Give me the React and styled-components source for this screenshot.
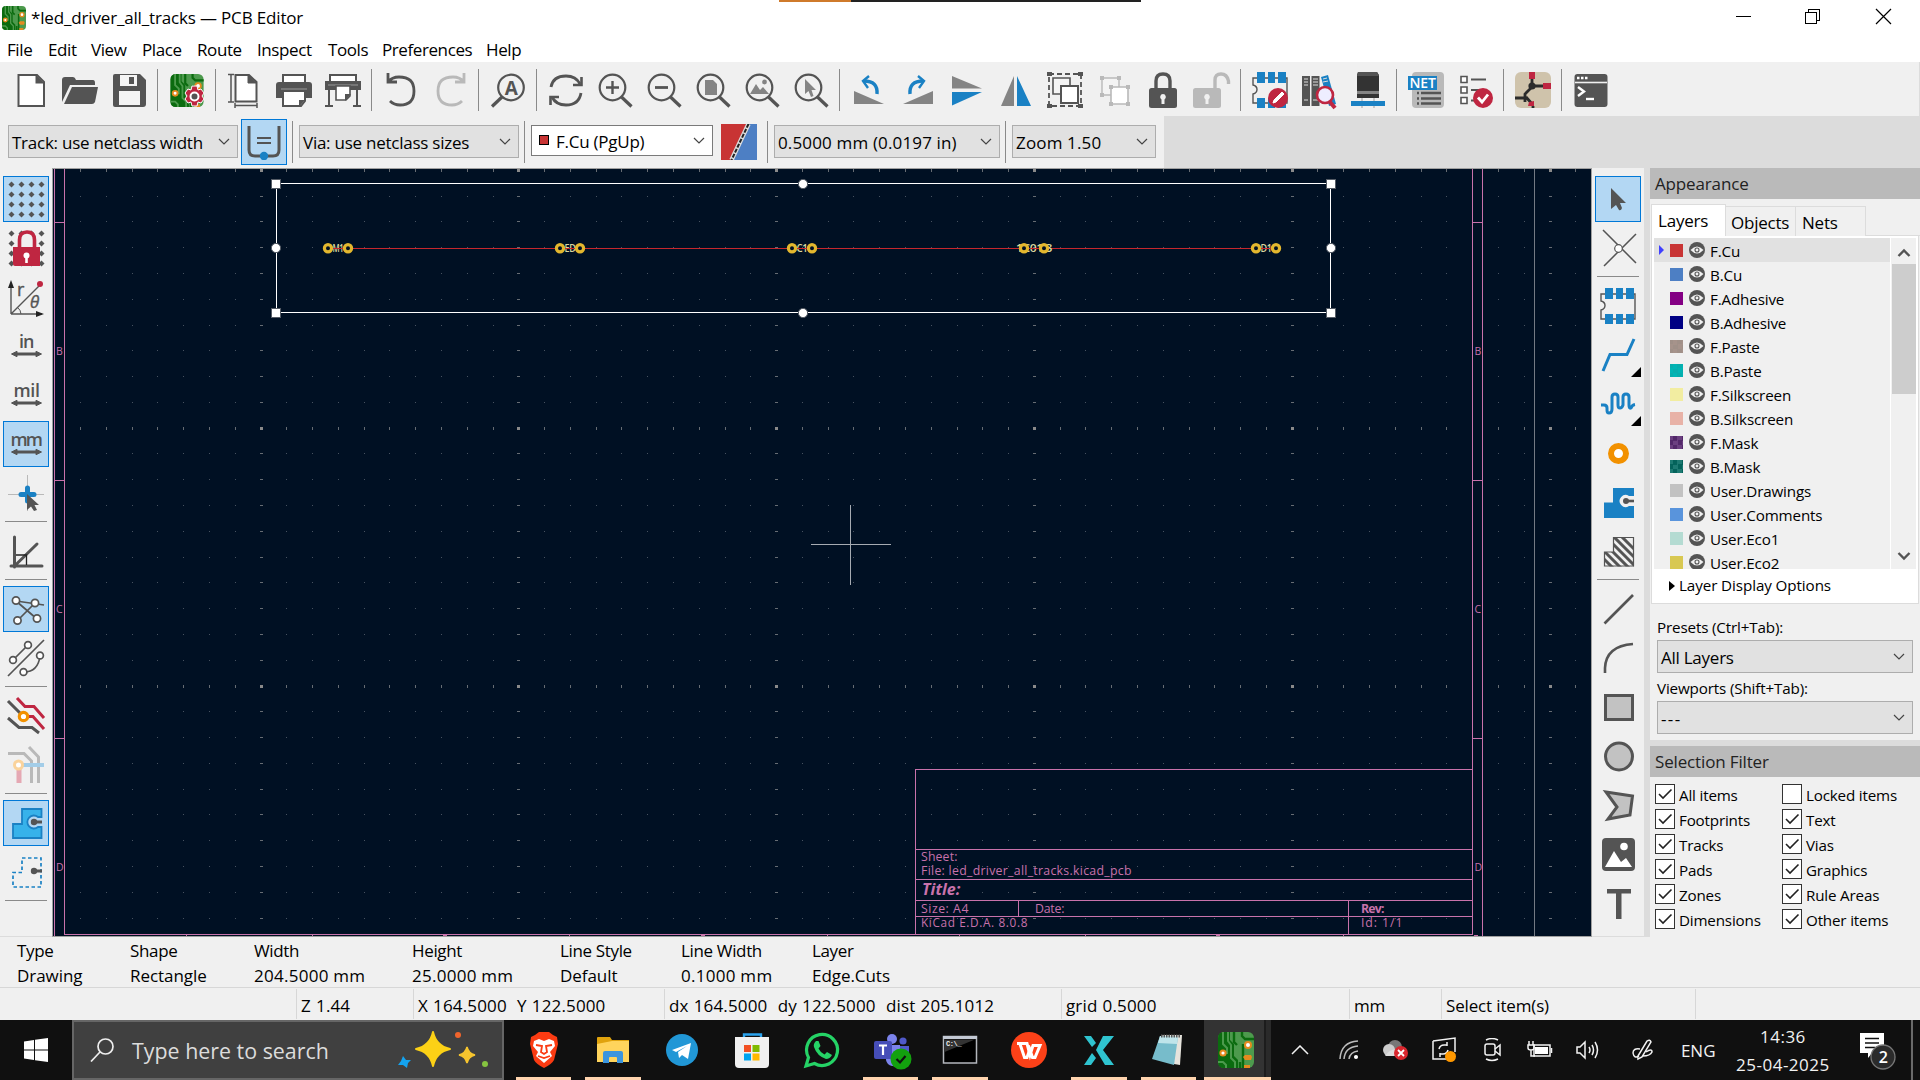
import React from "react";
import styled, { createGlobalStyle, css } from "styled-components";

const Global = createGlobalStyle`
  * { box-sizing: border-box; }
  body { margin: 0; overflow: hidden; background: #f0f0f0; }
  svg { display: block; flex: none; }
`;

const K = "#545454";
const B = "#1a81c4";
const R = "#bf2641";
const G = "#848484";
const L = "#b9b9b9";
const O = "#f29100";
const P = "#c872ab";

/* ---------- shell ---------- */
const Window = styled.div`
  width: 1920px;
  height: 1080px;
  display: flex;
  flex-direction: column;
  background: #f0f0f0;
  color: #000;
  font-family: "Open Sans", "Noto Sans", sans-serif;
  font-size: 17px;
  letter-spacing: -0.024em;
  white-space: pre;
  overflow: hidden;
`;
const TopStrip = styled.div`
  position: absolute;
  top: 0;
  left: 779px;
  width: 362px;
  height: 2px;
  background: linear-gradient(to right, #cf7a2b 72px, #222 72px);
`;
const TitleBar = styled.header`
  height: 35px;
  flex: none;
  background: #fff;
  display: flex;
  align-items: center;
  padding-left: 2px;
`;
const TitleText = styled.span`
  margin-left: 5px;
  flex: 1;
  line-height: 35px;
  letter-spacing: -0.16px;
`;
const WinControls = styled.div`
  display: flex;
  width: 212px;
  height: 35px;
`;
const MenuBar = styled.nav`
  height: 27px;
  flex: none;
  background: #fff;
  display: flex;
  padding-left: 7px;
`;
const MenuItem = styled.span`
  width: ${(p) => p.$w}px;
  line-height: 29px;
  flex: none;
`;
const Toolbar = styled.div`
  height: 54px;
  flex: none;
  display: flex;
  align-items: flex-start;
  padding: 10px 0 0 6px;
  border-right: 1px solid #dcdcdc;
`;
const Tool = styled.span`
  width: 49px;
  height: 36px;
  flex: none;
  padding-left: 7px;
`;
const Sep = styled.span`
  width: 1px;
  height: 42px;
  flex: none;
  background: #8a8a8a;
  margin: ${(p) => p.$m || "-3px 4px 0 4px"};
`;
const OptionsRow = styled.div`
  height: 52px;
  flex: none;
  background: #dcdcdc;
`;
const Options = styled.div`
  width: 1164px;
  height: 52px;
  background: #f0f0f0;
  display: flex;
  align-items: flex-start;
  padding: 3px 0 0 8px;
`;
const Combo = styled.div`
  width: ${(p) => p.$w}px;
  height: ${(p) => p.$h || 33}px;
  margin: ${(p) => p.$m || "6px 0 0 0"};
  flex: none;
  display: flex;
  align-items: center;
  justify-content: space-between;
  padding: 0 7px 0 ${(p) => (p.$white ? 7 : 3)}px;
  background: ${(p) => (p.$white ? "#fff" : "#e1e1e1")};
  border: 1px solid ${(p) => (p.$white ? "#7a7a7a" : "#adadad")};
  line-height: 30px;
  letter-spacing: ${(p) => p.$ls || "-0.25px"};
`;
const ComboLabel = styled.span`
  display: flex;
  align-items: center;
  padding-top: 2px;
`;
const CuSwatch = styled.i`
  width: 10px;
  height: 10px;
  background: #c83434;
  border: 1px solid #000;
  margin-right: 7px;
  margin-top: -4px;
`;
const Toggle = styled.span`
  width: 46px;
  height: 46px;
  flex: none;
  margin: ${(p) => p.$m || "0"};
  padding: 4px;
  border: 1px solid ${(p) => (p.$on ? "#0078d7" : "transparent")};
  background: ${(p) => (p.$on ? "#b3d7f3" : "transparent")};
  position: relative;
`;
const Flyout = styled.i`
  position: absolute;
  right: -1px;
  bottom: 0;
  border-left: 10px solid transparent;
  border-bottom: 10px solid #000;
`;

/* ---------- middle ---------- */
const Middle = styled.main`
  height: 769px;
  flex: none;
  display: flex;
`;
const SideBar = styled.aside`
  width: 52px;
  height: 769px;
  flex: none;
  display: flex;
  flex-direction: column;
  align-items: center;
  padding-top: 8px;
  gap: 3px;
  border-bottom: 1px solid #dcdcdc;
`;
const HSep = styled.span`
  width: 42px;
  height: 1px;
  flex: none;
  background: #8a8a8a;
  margin: 2px 0 3px;
`;
const CanvasFrame = styled.div`
  width: 1540px;
  height: 769px;
  flex: none;
  border: 1px solid #a0a0a0;
  background: #001023;
`;
const Dock = styled.section`
  width: 276px;
  background: #dcdcdc;
  padding-left: 6px;
`;
const Caption = styled.div`
  height: 31px;
  background: #bababa;
  color: #222;
  padding-left: 5px;
  line-height: 31px;
  letter-spacing: -0.15px;
`;
const Panel = styled.div`
  height: ${(p) => p.$h}px;
  background: #f0f0f0;
  padding: ${(p) => p.$p || "0"};
  margin-bottom: ${(p) => p.$mb || 0}px;
`;
const Tabs = styled.div`
  display: flex;
  height: 32px;
  align-items: flex-end;
  border-bottom: 1px solid #dcdcdc;
`;
const Tab = styled.span`
  width: ${(p) => p.$w}px;
  height: ${(p) => (p.$on ? 32 : 30)}px;
  background: ${(p) => (p.$on ? "#fff" : "#f0f0f0")};
  border: 1px solid #dcdcdc;
  border-left-width: ${(p) => (p.$on ? 1 : 0)}px;
  border-bottom: 0;
  margin-bottom: -1px;
  line-height: 31px;
  padding-left: ${(p) => p.$pl}px;
  letter-spacing: -0.22px;
`;
const Page = styled.div`
  width: 268px;
  height: 368px;
  background: #fff;
  border: 1px solid #dcdcdc;
  border-top: 0;
  padding: 2px 1px 0 2px;
`;
const ListWrap = styled.div`
  display: flex;
  height: 331px;
`;
const List = styled.div`
  width: 236px;
  height: 331px;
  overflow: hidden;
  background: #f0f0f0;
`;
const Row = styled.div`
  height: 24px;
  display: flex;
  align-items: center;
  background: ${(p) => (p.$on ? "#e1e1e1" : "transparent")};
  font-size: 15.2px;
  letter-spacing: -0.15px;
`;
const Mark = styled.i`
  width: 5px;
  height: 10px;
  margin: 0 6px 0 5px;
  border: 5px solid transparent;
  border-right: 0;
  border-left-color: ${(p) => (p.$on ? "#4040ff" : "transparent")};
`;
const Swatch = styled.i`
  width: 13px;
  height: 13px;
  margin-right: 6px;
  background: ${(p) => p.$c};
  ${(p) =>
    p.$c2 &&
    css`
      background: conic-gradient(${p.$c2} 25%, ${p.$c} 0 50%, ${p.$c2} 0 75%, ${p.$c} 0) 3px 0 / 9px 9px;
    `}
`;
const RowName = styled.span`
  margin-left: 5px;
  line-height: 22px;
  padding-top: 2px;
`;
const Scroll = styled.div`
  width: 25px;
  height: 331px;
  margin-left: 1px;
  display: flex;
  flex-direction: column;
  align-items: center;
  justify-content: space-between;
  background: #f0f0f0;
`;
const Thumb = styled.i`
  width: 24px;
  height: 130px;
  background: #cdcdcd;
  margin-bottom: 149px;
`;
const DisplayOptions = styled.div`
  display: flex;
  align-items: center;
  font-size: 15.2px;
  line-height: 33px;
  padding-left: 15px;
  letter-spacing: -0.09px;
  i {
    border: 5px solid transparent;
    border-left: 6px solid #000;
    border-right: 0;
    margin-right: 4px;
  }
`;
const Field = styled.div`
  font-size: 15.2px;
  line-height: 24px;
  letter-spacing: -0.15px;
  margin: ${(p) => p.$m};
`;
const Checks = styled.div`
  display: grid;
  grid-template-columns: 127px 130px;
  grid-auto-rows: 25px;
  padding: 7px 0 0 5px;
  font-size: 15.2px;
  letter-spacing: -0.18px;
`;
const Check = styled.label`
  display: flex;
  line-height: 23px;
  gap: 4px;
`;
const Box = styled.i`
  width: 20px;
  height: 20px;
  border: 1px solid #333;
  background: #fff;
`;

/* ---------- bottom ---------- */
const Message = styled.div`
  height: 51px;
  flex: none;
  display: flex;
  padding: 1px 0 0 17px;
  border-bottom: 1px solid #d7d7d7;
`;
const MsgItem = styled.div`
  width: ${(p) => p.$w}px;
  line-height: 25px;
`;
const MsgLabel = styled.div`
  letter-spacing: -0.35px;
`;
const MsgValue = styled.div`
  letter-spacing: ${(p) => (p.$num ? "0.27px" : "-0.05px")};
`;
const Status = styled.div`
  height: 32px;
  flex: none;
  display: flex;
  padding-top: 1px;
`;
const Cell = styled.div`
  width: ${(p) => p.$w}px;
  height: 30px;
  flex: none;
  border-right: 1px solid #d7d7d7;
  padding-left: 4px;
  line-height: 33px;
  letter-spacing: ${(p) => (p.$num ? "0.14px" : "-0.15px")};
  word-spacing: ${(p) => (p.$num ? "0.6px" : "0")};
`;
const TaskBar = styled.footer`
  height: 60px;
  flex: none;
  background: #101010;
  color: #f2f2f2;
  display: flex;
`;
const Start = styled.div`
  width: 72px;
  padding: 18px 0 0 24px;
`;
const Search = styled.div`
  width: 432px;
  height: 60px;
  background: #404040;
  border: 2px solid #666;
  display: flex;
  align-items: center;
  padding-left: 16px;
  margin-right: 5px;
  font-size: 21.4px;
  letter-spacing: 0;
  color: #dcdcdc;
`;
const SearchText = styled.span`
  margin-left: 18px;
  width: 263px;
  line-height: 60px;
  padding-top: 2px;
`;
const TaskButton = styled.div`
  width: ${(p) => p.$w || 69.4}px;
  height: 60px;
  flex: none;
  display: flex;
  justify-content: center;
  padding-top: 12px;
  margin-left: ${(p) => p.$ml || 0}px;
  background: ${(p) => (p.$active ? "linear-gradient(to right, #333 60px, #1c1c1c 60px 62px, #2a2a2a 62px)" : "transparent")};
  padding-right: ${(p) => (p.$active ? 3 : 0)}px;
  position: relative;
`;
const Running = styled.i`
  position: absolute;
  bottom: 0;
  left: ${(p) => (p.$full ? 0 : 7)}px;
  right: ${(p) => (p.$full ? 0 : 7)}px;
  height: 3px;
  background: #ffd4ae;
`;
const Tray = styled.div`
  flex: 1;
  display: flex;
  align-items: center;
`;
const TrayIcon = styled.span`
  width: ${(p) => p.$w}px;
  flex: none;
  display: flex;
  justify-content: center;
`;
const Lang = styled.span`
  width: 50px;
  margin-left: 10px;
  padding-top: 1px;
  letter-spacing: 0;
`;
const Clock = styled.div`
  width: 104px;
  text-align: center;
  line-height: 28px;
  padding-top: 1px;
  letter-spacing: 0.5px;
`;
const Notice = styled.span`
  margin-left: 25px;
`;
const ShowDesktop = styled.i`
  width: 2px;
  height: 60px;
  background: #6a6a6a;
  margin-left: auto;
  margin-right: 7px;
`;

/* ---------- icons, 36 x 36 ---------- */
const I = ({ children, s = 36, ...r }) => (
  <svg width={s} height={s} viewBox="0 0 36 36" fill="none" {...r}>
    {children}
  </svg>
);
const Board = () => (
  <g>
    <rect x="0" y="0" width="36" height="36" rx="6" fill="#4d9a4d" />
    <path d="M0 6Q0 0 6 0H12V8L16 12V24L20 28V36H6Q0 36 0 30Z" fill="#0b6b0f" />
    <path d="M5 0V12L9 16V22M10 0V9L13 13V26L17 30V36M0 30H5L8 33V36M19 0V11L22 14V24" stroke="#4d9a4d" strokeWidth="2" />
    <path d="M24 0V4L27 7H36M16 0V10L19 13M22 30V36M25 12V36" stroke="#0b6b0f" strokeWidth="2.4" />
    <circle cx="30" cy="13" r="3" fill="#fff" stroke="#e58a1f" strokeWidth="2" />
    <circle cx="5" cy="21" r="2.6" fill="#fff" stroke="#e58a1f" strokeWidth="2" />
    <path d="M27 23H33L34 25L33 28H27L25 25ZM26 33H32V36H26Z" fill="#e58a1f" />
  </g>
);
const Lens = ({ children }) => (
  <g>
    <circle cx="15.5" cy="15.5" r="12.8" fill="#f0f0f0" stroke={K} strokeWidth="2.2" />
    <path d="M24.500 25L34.500 34.500" stroke={K} strokeWidth="3.2" />
    {children}
  </g>
);
const Arrow = () => <path d="M3.500 26L9 23.300V25H28V23.300L33.500 26L28 28.700V27H9V28.700Z" fill={K} stroke={K} />;
const Unit = ({ children, w }) => (
  <text x="18.500" y="19.800" textAnchor="middle" textLength={w} fontFamily="Open Sans" fontWeight="600" fontSize="18" fill={K}>
    {children}
  </text>
);
const dots = (c) =>
  [3.5, 13.5, 23.5, 33.5].flatMap((y) => [3.5, 13.5, 23.5, 33.5].map((x) => <path key={x + "," + y} d={`M${x - 3} ${y}L${x} ${y - 3}L${x + 3} ${y}L${x} ${y + 3}Z`} fill={c} />));
const Chip = () => (
  <g>
    <path d="M5 6H1V13Q5 14 5 17.500Q5 21 1 22V31H35V6Z" stroke={K} strokeWidth="1.4" />
    <path d="M5 0H13V11H5ZM16 0H23V11H16ZM26 0H34V11H26ZM5 26H13V36H5ZM16 26H23V36H16ZM26 26H34V36H26Z" fill={B} />
  </g>
);
const Lock = ({ c, open }) => (
  <g>
    <path d={open ? "M21 17V8Q21 2 27 2Q33 2 34.500 9V12" : "M11 17V9Q11 2 18 2Q25 2 25 9V17"} stroke={c} strokeWidth="3.4" />
    <rect x={open ? -1 : 4} y="16" width="28" height="20" rx="2.500" fill={c} />
    <path d={open ? "M13 22a3 3 0 0 1 1.500 5.500V32H11.500V27.500A3 3 0 0 1 13 22" : "M18 22a3 3 0 0 1 1.500 5.500V32H16.500V27.500A3 3 0 0 1 18 22"} fill="#f0f0f0" />
  </g>
);

const icons = {
  new: (
    <g>
      <path d="M5.500 3H24L31 10V34H5.500Z" fill="#fff" stroke={K} strokeWidth="2" />
      <path d="M22.500 2.500V11.500H31.500Z" fill={K} />
    </g>
  ),
  open: (
    <g fill={K}>
      <path d="M0 8Q0 5 3 5H11Q13 5 14 8H31Q33 8 33 11V13H8L0 30Z" />
      <path d="M10 15H36L33 30Q32 32 30 32H2Z" />
    </g>
  ),
  save: (
    <g>
      <path d="M4 2H29L35 8V32Q35 35 32 35H4Q2 35 2 33V4Q2 2 4 2Z" fill={K} />
      <path d="M9 3H26V14H9ZM8 19H29V33H8Z" fill="#f4f4f4" />
      <path d="M18 5H23V12H18Z" fill={K} />
    </g>
  ),
  setup: (
    <g>
      <g transform="translate(1.500 2) scale(.92)"><Board /></g>
      <g stroke="#fff" strokeWidth="1"><path d="M23 14h5l1 4 3-1 3 4-2 3 2 3-3 4-3-1-1 4h-5l-1-4-3 1-3-4 2-3-2-3 3-4 3 1z" fill={R} /></g>
      <circle cx="25.500" cy="24.500" r="4" fill={K} stroke="#fff" strokeWidth="2" />
    </g>
  ),
  page: (
    <g stroke={K}>
      <path d="M8.500 3H22L29.500 10V29.500H8.500Z" fill="#fff" strokeWidth="2" />
      <path d="M21 3V11H29.500Z" fill={K} />
      <path d="M4 2.500V30M1 2.500H7M1 30H7M8 33.500H30M8 31V36M30 31V36" strokeWidth="1.500" />
    </g>
  ),
  print: (
    <g>
      <path d="M7 10V3H29V10" stroke={K} strokeWidth="2" fill="#fff" />
      <path d="M3 10H33Q36 10 36 13V26H0V13Q0 10 3 10Z" fill={K} />
      <path d="M5 17H31" stroke="#9a9a9a" />
      <path d="M7 19H29V29L25 34H7Z" fill="#fff" stroke={K} strokeWidth="2" /><path d="M29 28H23V35Z" fill={K} />
    </g>
  ),
  plot: (
    <g>
      <path d="M5 10V3H31V10" stroke={K} strokeWidth="2" fill="#fff" />
      <path d="M0 9H36V18H0Z" fill={K} />
      <path d="M3 13H33" stroke="#9a9a9a" />
      <path d="M11 14H25V24L21 28H11Z" fill="#fff" stroke={K} strokeWidth="1.600" /><path d="M26 22H20V29Z" fill={K} />
      <path d="M4 18V34M32 18V34M0 34H8M28 34H36" stroke={K} strokeWidth="2" />
    </g>
  ),
  undo: <path d="M5 1V10H14M5 10Q9 5 16 5Q31 5 31 19Q31 33 17 33Q11 33 7 29" stroke={K} strokeWidth="2.800" />,
  redo: <path d="M32 1V10H23M32 10Q28 5 21 5Q6 5 6 19Q6 33 20 33Q26 33 30 29" stroke={L} strokeWidth="2.800" />,
  find: (
    <g>
      <circle cx="21" cy="15.500" r="12.800" stroke={K} strokeWidth="2.200" />
      <path d="M12 25L2 34.500" stroke={K} strokeWidth="3.200" />
      <text x="21" y="22.500" textAnchor="middle" fontFamily="Open Sans" fontWeight="700" fontSize="19" fill={K}>A</text>
    </g>
  ),
  refresh: (
    <g stroke={K} strokeWidth="2.800">
      <path d="M3 15Q5 4 18 4Q28 4 32 12M33 21Q31 33 18 33Q8 33 4 25" />
      <path d="M33.500 5V13H25M2.500 33V25H11" strokeWidth="2.600" />
    </g>
  ),
  zin: <Lens><path d="M9 15.500H22M15.500 9V22" stroke={K} strokeWidth="2.400" /></Lens>,
  zout: <Lens><path d="M9 15.500H22" stroke={K} strokeWidth="2.800" /></Lens>,
  zfit: <Lens><path d="M10 8H18L22 12V23H10Z" fill={G} /></Lens>,
  zobj: <Lens><path d="M6 22L12 12L16 18L19 15L25 22Z" fill={G} /><circle cx="20.500" cy="10" r="2.400" fill={G} /></Lens>,
  zsel: <Lens><path d="M12 7V22L15.500 19L18 25L20.500 24L18.500 18H23Z" fill={G} /></Lens>,
  ccw: <g><path d="M3 19V32H33Z" fill={G} /><path d="M26 22Q27 9 13 9" stroke={B} strokeWidth="3.400" /><path d="M18 4L12 9L17 16" stroke={B} strokeWidth="2.400" /></g>,
  cw: <g><path d="M33 19V32H3Z" fill={G} /><path d="M10 22Q9 9 23 9" stroke={B} strokeWidth="3.400" /><path d="M18 4L24 9L19 16" stroke={B} strokeWidth="2.400" /></g>,
  flipv: <g><path d="M3 4V16.500H33Z" fill={G} /><path d="M3 20H33L3 33.500Z" fill={B} /></g>,
  fliph: <g><path d="M3 34H16V4Z" fill={G} /><path d="M33 34H19V4Z" fill={B} /></g>,
  group: (
    <g>
      <path d="M2 2H34V34H2Z" stroke={K} strokeWidth="1.800" strokeDasharray="5 3" />
      <path d="M6 6H23V22H6Z" fill="#f4f4f4" stroke={K} strokeWidth="1.600" />
      <path d="M14 14H31V31H14Z" fill="#fff" stroke={K} strokeWidth="2" />
      <path d="M0 0H5V4H0ZM31 0H36V4H31ZM0 32H5V36H0ZM31 32H36V36H31Z" fill={K} />
    </g>
  ),
  ungroup: (
    <g>
      <path d="M6 6H23V23H6Z" fill="#f4f4f4" stroke={L} strokeWidth="1.400" />
      <path d="M15 15H32V32H15Z" fill="#fff" stroke={L} strokeWidth="1.600" />
      <path d="M4 4H8V8H4ZM21 4H25V8H21ZM4 21H8V25H4ZM13 13H17V17H13ZM30 13H34V17H30ZM13 30H17V34H13ZM30 30H34V34H30Z" fill={L} />
    </g>
  ),
  lock: <Lock c={K} />,
  unlock: <Lock c={L} open />,
  fpedit: <g><Chip /><circle cx="26" cy="26" r="10" fill={R} /><path d="M21 31L22 28L30 20L32 22L24 30Z" fill="#fff" stroke="#fff" /></g>,
  fplib: (
    <g>
      <path d="M1 4H9V34H1ZM10.500 4H18.500V34H10.500Z" fill={K} />
      <path d="M20 5L27 3L35 32L28 34Z" fill={B} />
      <path d="M3 7H7M3 10H7M3 13H7M12 7H17M12 10H17M12 13H17M3 28H7M12 28H17M22 7L26 6M22 10L27 9" stroke="#ddd" />
      <path d="M29 30L34 36" stroke={R} strokeWidth="4" />
      <circle cx="24" cy="23" r="8" fill="#eef" stroke={R} strokeWidth="2.600" />
    </g>
  ),
  view3d: (
    <g>
      <path d="M8 0H27L29 3V20H7V3Z" fill="#333" /><path d="M8 0H27L29 4H7Z" fill={K} />
      <path d="M7 19H29V22H7Z" fill={G} /><path d="M7 22H29V26H7Z" fill="#333" />
      <path d="M12 26V36M24 26V36" stroke={L} strokeWidth="1.500" />
      <path d="M1 29H35V34H1Z" fill={B} />
    </g>
  ),
  net: (
    <g>
      <rect x="4" y="0" width="32" height="36" rx="4" fill={L} />
      <path d="M0 4H29V18H0Z" fill={B} />
      <text x="14.500" y="16" textAnchor="middle" textLength="26" fontFamily="Open Sans" fontWeight="600" fontSize="14" fill="#fff">NET</text>
      <path d="M13 21H33M13 26.500H33M13 31.500H33M9 21H11M9 26.500H11M9 31.500H11" stroke={K} strokeWidth="2.600" />
    </g>
  ),
  drc: (
    <g>
      <path d="M4 4.500H10V10.500H4ZM4 15H10V21H4ZM4 25.500H10V31.500H4Z" stroke={K} strokeWidth="1.600" fill="#fff" />
      <path d="M14 7.500H29M14 18H25M14 28.500H20" stroke={K} strokeWidth="1.800" />
      <circle cx="26" cy="26" r="10" fill={R} /><path d="M21 25.500L25 30L31 22.500" stroke="#fff" strokeWidth="2.800" />
    </g>
  ),
  sch: (
    <g>
      <rect width="36" height="36" rx="6" fill="#cfc3ab" />
      <path d="M17 6V14L17 15L10 22V30M10 26H0M17 14H28M11 25L18 33M18 34V36" stroke="#2b2b2b" strokeWidth="2.800" />
      <circle cx="17" cy="14" r="3.600" fill="#2b2b2b" />
      <path d="M14 0H20V7H14ZM28 11H36V17H28ZM14 30L19 29V34H13Z" fill={R} />
    </g>
  ),
  term: (
    <g>
      <rect x="1.500" y="2" width="33" height="33" rx="3" fill={K} />
      <path d="M2 10.500H34" stroke="#f0f0f0" strokeWidth="1.600" />
      <path d="M4 6H6.500M8 6H10.500M12 6H14.500" stroke="#fff" strokeWidth="2.400" />
      <path d="M5 15L11 19.500L5 24" stroke="#fff" strokeWidth="2.400" /><path d="M13 27H21" stroke="#fff" strokeWidth="2.400" />
    </g>
  ),
  width: (
    <g>
      <path d="M3 2V26Q3 32 9 32H27Q33 32 33 26V2" stroke={K} strokeWidth="3" /><path d="M11 14H25M11 19H25" stroke={K} strokeWidth="1.800" />
      <circle cx="18" cy="32" r="4.200" fill={B} />
    </g>
  ),
  layers: (
    <g>
      <path d="M0 0H27L10 36H0Z" fill="#c83434" /><path d="M27 0H36V36H10Z" fill="#4d7fc4" />
      <path d="M27.500 0L10.500 36" stroke="#ddd" strokeWidth="4.500" /><path d="M27.500 0L10.500 36" stroke="#222" strokeWidth="2" strokeDasharray="4 1.500" />
    </g>
  ),
  grid: <g>{dots(K)}</g>,
  gridLock: (
    <g>
      {dots(K)}
      <path d="M5 17H32V36H7Q5 36 5 34Z" fill={R} /><path d="M11.500 17V10Q11.500 2 19 2Q26.500 2 26.500 10V17" fill="#f0f0f0" stroke={R} strokeWidth="3.600" />
      <circle cx="18.500" cy="25.500" r="3" fill="#fff" /><path d="M18.500 26V33" stroke="#fff" strokeWidth="2.600" />
    </g>
  ),
  polar: (
    <g>
      <path d="M3 35V4M3 35H34M3 35L31 7" stroke={K} strokeWidth="1.400" />
      <path d="M3 1L6 9H0ZM36 35L28 32V38ZM0 35H1" fill="#222" />
      <path d="M9 28Q13 31 13 35" stroke={K} />
      <circle cx="32" cy="5" r="3" fill={R} />
      <text x="9" y="17" fontFamily="Open Sans" fontSize="18" fill={K} stroke={K} strokeWidth=".4">r</text>
      <text x="22" y="29" fontFamily="Open Sans" fontStyle="italic" fontSize="17" fill={K} stroke={K} strokeWidth=".4">θ</text>
    </g>
  ),
  inch: <g><Unit w="15">in</Unit><Arrow /></g>,
  mil: <g><Unit w="26">mil</Unit><Arrow /></g>,
  mm: <g><Unit w="32">mm</Unit><Arrow /></g>,
  cursor: (
    <g>
      <path d="M0 19.500H36M19.500 0V36" stroke={L} /><path d="M13 19.500H26M19.500 13V26" stroke={B} strokeWidth="5" strokeLinecap="round" />
      <path d="M19 19V35L23 31.500L26 36L29 35L26.500 30H31Z" fill={K} />
    </g>
  ),
  angle: (
    <g>
      <path d="M6.500 4V34M3 33H34M6.500 33L29 11" stroke={K} strokeWidth="3" strokeLinecap="round" />
      <path d="M8 22H18.500V32" stroke="#222" strokeWidth="1.300" />
    </g>
  ),
  rats: (
    <g stroke={K} strokeWidth="1.700">
      <path d="M8 10L36 14M8 10L29 28M9 30L27 12" />
      {[[8, 9.500], [27, 12], [9.500, 29.500], [29, 27.500]].map(([x, y]) => <circle key={x} cx={x} cy={y} r="3.600" fill="#fff" />)}
    </g>
  ),
  ratsCurve: (
    <g stroke={K} strokeWidth="1.700">
      <path d="M0 36L36 0M5 20L20 5M16 32Q30 32 32 16" />
      {[[5, 20], [20, 5], [32, 15.500], [15.500, 32]].map(([x, y]) => <circle key={x} cx={x} cy={y} r="3.400" fill="#fff" />)}
    </g>
  ),
  contrast: (
    <g strokeWidth="3">
      <path d="M0 3L14 17M0 20L11 29.500H24L31 35" stroke={K} /><path d="M9 0L17 8.500H26L36 20M18 18.500H25L36 31" stroke={R} />
      <circle cx="15.500" cy="18.500" r="4.200" fill="#fff" stroke={O} strokeWidth="3.200" />
    </g>
  ),
  netcolor: (
    <g strokeWidth="3">
      <path d="M0 6.500H16L23.500 14V36M21 0L30.500 10V36" stroke={L} />
      <path d="M11 20V36" stroke="#e5a8b3" strokeWidth="5" /><path d="M14 18H36" stroke="#a3cde8" strokeWidth="4" />
      <circle cx="10.500" cy="18" r="4" fill="#fff" stroke="#fad39b" strokeWidth="3" />
    </g>
  ),
  zoneFill: <g><path d="M5 19H14V4H33.500V12H30A6.500 6.500 0 1 0 30 22H33.500V33H5Z" fill="#37b2ea" stroke={B} strokeWidth="1.800" /><circle cx="26" cy="17" r="3.200" fill={K} /><path d="M26 17H34" stroke={K} strokeWidth="3" /></g>,
  zoneLine: <g><path d="M14 18.500H5V33H33V4H14Z" stroke={B} strokeWidth="1.700" strokeDasharray="3.500 2.500" /><circle cx="26" cy="17" r="3.200" fill={K} /><path d="M26 17H34" stroke={K} strokeWidth="3" /></g>,
  select: <path d="M11 7V28L16 24L19 29Q21 30 22 27L20 22H26Z" fill={K} />,
  hub: <g><path d="M3 0L36 33M36 4L4 36" stroke={K} strokeWidth="1.500" /><circle cx="18.500" cy="18.500" r="3.800" fill="#fff" stroke={K} strokeWidth="1.200" /></g>,
  chip: <Chip />,
  route: <path d="M3 34L10 17.500H27L34 2" stroke={B} strokeWidth="3" />,
  tune: <path d="M1 19H4Q7 19 7 22V24Q7 27 9 27Q12 27 12 23V11Q12 8 15 8T18 11V19Q18 22 20 22T23 19V11Q23 8 26 8T29 11V19Q29 23 31 22Q32 19 35 18.500" stroke={B} strokeWidth="3" />,
  via: <circle cx="18.500" cy="18.500" r="7.500" fill="#fff" stroke={O} strokeWidth="6" />,
  zone: <g><path d="M4 18.500H13V4H34V12H29A6 6 0 1 0 29 22H34V34H4Z" fill={B} /><circle cx="26" cy="17" r="3" fill={K} /><path d="M26 17H34" stroke={K} strokeWidth="2.600" /></g>,
  keepout: (
    <g>
      <clipPath id="kz"><path d="M4 19H13.500V4H34V33.500H4Z" /></clipPath>
      <g clipPath="url(#kz)" stroke={K} strokeWidth="3"><path d="M-14 0L22 36M-6 0L30 36M2 0L38 36M10 0L46 36M18 0L54 36M-22 0L14 36" /></g>
      <path d="M4.500 19H13.500V4.500H33.500V33H4.500Z" stroke={K} strokeWidth="1.200" />
    </g>
  ),
  line: <path d="M4.500 32.500L33 4" stroke={K} strokeWidth="2.600" />,
  arc: <path d="M5 33V28Q6 6 33 4" stroke={K} strokeWidth="2.600" />,
  rect: <path d="M5.500 6.500H32.500V30.500H5.500Z" fill="#c2c2c2" stroke={K} strokeWidth="3" />,
  circle: <circle cx="19" cy="18.500" r="13.500" fill="#c2c2c2" stroke={K} strokeWidth="3" />,
  poly: <path d="M6 5L32.500 9L30 28L8 32L17 20Z" fill="#c2c2c2" stroke={K} strokeWidth="3" />,
  image: <g><rect x="2" y="2" width="33" height="33" rx="4" fill={K} /><path d="M5 31L14 15L21 26L26 22L32 31Z" fill="#fff" /><circle cx="24" cy="10.500" r="3.800" fill="#fff" /></g>,
  text: <path d="M7 4H31V8.500H21.500V34H16V8.500H7Z" fill={K} />,
};

const Chevron = () => (
  <svg width="12" height="8" viewBox="0 0 12 8" fill="none"><path d="M1 1L6 6L11 1" stroke="#444" strokeWidth="1.200" /></svg>
);
const Eye = () => (
  <svg width="16" height="16" viewBox="0 0 16 16" fill="none">
    <circle cx="8" cy="8" r="8" fill={K} />
    <path d="M1.500 8Q8 1 14.500 8Q8 15 1.500 8Z" fill="#f0f0f0" />
    <circle cx="8" cy="8" r="2" stroke={K} strokeWidth="1.100" />
  </svg>
);
const BoardIcon = ({ s }) => <I s={s}><Board /></I>;

/* ---------- PCB canvas ---------- */
const X0 = 3.2;
const Y0 = 170.4;
const STEP = 25.78;
function GridDots() {
  const out = [];
  for (let i = 3; i < 62; i++)
    for (let j = 0; j < 30; j++) {
      const x = Math.floor(X0 + i * STEP);
      const y = Math.floor(Y0 + j * STEP);
      const mx = i % 10 === 0;
      const my = j % 10 === 0;
      out.push(
        <rect key={i + "-" + j} x={mx ? x - 1 : x} y={my ? y - 1 : y} width={mx ? 3 : 1} height={my ? 3 : 1} fill={mx && my ? "#8a8a8a" : mx || my ? "#666c73" : "#475260"} />
      );
    }
  return out;
}
const pads = [
  [328, "M1", 11],
  [560, "ED", 11],
  [792, "C1", 11],
  [1024, "1C01.3", 36],
  [1256, "D1", 11],
];
const KText = ({ x, y, w, size = 12.3, children, ...r }) => (
  <text x={x} y={y} textLength={w} fontFamily="Open Sans" fontSize={size} fill={P} {...r}>{children}</text>
);
const Pcb = () => (
  <svg width="1538" height="767" viewBox="53 169 1538 767" fill="none" shapeRendering="crispEdges">
    <GridDots />
    <g stroke={P} strokeWidth="1">
      <path d="M54.500 169V936M64.500 169V934.500H1472.500V169M1482.500 169V936" />
      <path d="M54 222.500H64M54 480.500H64M54 738.500H64M1473 222.500H1482M1473 480.500H1482M1473 738.500H1482" />
      <path d="M312.500 935V936M569.500 935V936M827.500 935V936M1085.500 935V936M1343.500 935V936M186.500 935V936M443 935.500H447M701 935.500H705M959.500 935V936M1216 935.500H1220M1474 935.500H1478" />
      <path d="M915.500 934V769.500H1472M915 849.500H1472M915 879.500H1472M915 900.500H1472M915 916.500H1472M1018.500 900V916M1348.500 900V934" />
    </g>
    <path d="M1534.500 169V936" stroke="#737a84" />
    <g>
      <KText x="56" y="355" w="6" size="10.500">B</KText>
      <KText x="56" y="613" w="6" size="10.500">C</KText>
      <KText x="56" y="871" w="6" size="10.500">D</KText>
      <KText x="1474.500" y="355" w="6" size="10.500">B</KText>
      <KText x="1474.500" y="613" w="6" size="10.500">C</KText>
      <KText x="1474.500" y="871" w="6" size="10.500">D</KText>
      <KText x="921" y="861" w="36">Sheet:</KText>
      <KText x="921" y="875" w="210">File: led_driver_all_tracks.kicad_pcb</KText>
      <KText x="922" y="895" w="38" size="16" fontWeight="700" fontStyle="italic">Title:</KText>
      <KText x="921" y="913" w="47">Size: A4</KText>
      <KText x="1035" y="913" w="29">Date:</KText>
      <KText x="1361" y="913" w="23" fontWeight="700">Rev:</KText>
      <KText x="921" y="927" w="106" size="11.800">KiCad E.D.A. 8.0.8</KText>
      <KText x="1361" y="927" w="41">Id: 1/1</KText>
    </g>
    <path d="M328 248.500H1276" stroke="#c5272d" />
    {pads.map(([x, t, w]) => (
      <g key={x} shapeRendering="auto">
        <text x={x + 10} y="252" textAnchor="middle" textLength={w} lengthAdjust="spacingAndGlyphs" fontFamily="Open Sans" fontWeight="600" fontSize="11" fill="#dcd9a0">{t}</text>
        {[x, x + 20].map((c) => <circle key={c} cx={c} cy="248.300" r="3.600" fill="#001023" stroke="#e3b72e" strokeWidth="3.200" />)}
        <path d={`M${x + 5} 248.500H${x + 15}`} stroke="#c5272d" />
      </g>
    ))}
    <rect x="276.500" y="183.500" width="1054" height="129" stroke="#fff" />
    <g fill="#fff" stroke="#555c66">
      {[[276, 184], [1331, 184], [276, 313], [1331, 313]].map(([x, y]) => <rect key={x + "" + y} x={x - 4.500} y={y - 4.500} width="9" height="9" />)}
      <g shapeRendering="auto">{[[803, 184], [803, 313], [276, 248], [1331, 248]].map(([x, y]) => <circle key={x + "" + y} cx={x} cy={y} r="4.600" />)}</g>
    </g>
    <path d="M811 544.500H891M850.500 505V585" stroke="#a6abb2" />
  </svg>
);

/* ---------- data ---------- */
const menus = [["File", 41], ["Edit", 43], ["View", 51], ["Place", 55], ["Route", 60], ["Inspect", 71], ["Tools", 54], ["Preferences", 104], ["Help", 50]];
const tools = "new open save | setup | page print plot | undo redo | find | refresh zin zout zfit zobj zsel | ccw cw flipv fliph group ungroup lock unlock | fpedit fplib view3d | net drc | sch | term".split(" ");
const leftTools = "grid! gridLock polar inch mil mm! cursor | angle | rats! ratsCurve | contrast netcolor | zoneFill! zoneLine |".split(" ");
const rightTools = "select! hub | chip route+ tune+ via zone keepout | line arc rect circle poly image text".split(" ");
const layers = [
  ["F.Cu", "#c83434"], ["B.Cu", "#4d7fc4"], ["F.Adhesive", "#840084"], ["B.Adhesive", "#000084"],
  ["F.Paste", "#a6938b", "#a09088"], ["B.Paste", "#00b5b5", "#08adad"], ["F.Silkscreen", "#f2eda1"], ["B.Silkscreen", "#e8b2a7"],
  ["F.Mask", "#53286a", "#6b3f80"], ["B.Mask", "#04635b", "#1d7a72"], ["User.Drawings", "#c2c2c2"], ["User.Comments", "#5994dc"],
  ["User.Eco1", "#b4dbd2"], ["User.Eco2", "#d8c852"],
];
const filters = [["All items", "Locked items"], ["Footprints", "Text"], ["Tracks", "Vias"], ["Pads", "Graphics"], ["Zones", "Rule Areas"], ["Dimensions", "Other items"]].flat();
const messages = [["Type", "Drawing", 113], ["Shape", "Rectangle", 124], ["Width", "204.5000 mm", 158], ["Height", "25.0000 mm", 148], ["Line Style", "Default", 121], ["Line Width", "0.1000 mm", 131], ["Layer", "Edge.Cuts", 120]];
const cells = [["", 297], ["Z 1.44", 117], ["X 164.5000  Y 122.5000", 251], ["dx 164.5000  dy 122.5000  dist 205.1012", 397], ["grid 0.5000", 288], ["mm", 92], ["Select item(s)", 254]];
const hasDigit = (t) => /\d/.test(t);

const VerticalTools = ({ items }) => (
  <SideBar>
    {items.map((t, i) => {
      if (t === "|") return <HSep key={i} />;
      const name = t.replace(/[!+]/, "");
      return (
        <Toggle key={i} $on={t.endsWith("!")}>
          <I overflow="visible">{icons[name]}</I>
          {t.endsWith("+") && <Flyout />}
        </Toggle>
      );
    })}
  </SideBar>
);

const taskApps = [
  ["brave", true, <g><path d="M9 3L13 0H23L27 3L31 5L32 12L28 28Q26 32 18 36Q10 32 8 28L4 12L5 5Z" fill="#fb3b12" /><path d="M8 9L13 7L18 9L23 7L28 9L29 14L24 20L26 24L18 31L10 24L12 20L7 14Z" fill="#fff" /><path d="M10 13L16 14L15 20L18 22L21 20L20 14L26 13M12 24L18 26L24 24" stroke="#fb3b12" strokeWidth="1.800" /></g>],
  ["explorer", true, <g><path d="M2 6Q2 5 3 5H15L17 8H34V30H2Z" fill="#e0a30d" /><path d="M2 12L17 9H34V30H2Z" fill="#ffd45c" /><path d="M8 31V21Q8 19 10 19H26Q28 19 28 21V31H22V26Q22 25 21 25H15Q14 25 14 26V31Z" fill="#3b95de" /></g>],
  ["telegram", false, <g><circle cx="18" cy="18" r="16" fill="#2197d6" /><path d="M8 18L27 11L24 27L18 23L15 26L14 20L23 14L12 20Z" fill="#fff" /></g>],
  ["store", false, <g><path d="M10 8V2.500H27V8" stroke="#2aa3ee" strokeWidth="2.400" /><path d="M1 5H35V32Q35 36 31 36H5Q1 36 1 32Z" fill="#f0f0f0" /><path d="M10 13H17V20H10Z" fill="#f25022" /><path d="M18.500 13H25.500V20H18.500Z" fill="#7fba00" /><path d="M10 21.500H17V28.500H10Z" fill="#00a4ef" /><path d="M18.500 21.500H25.500V28.500H18.500Z" fill="#ffb900" /></g>],
  ["whatsapp", false, <g transform="translate(1 0)"><path d="M2 34L4.500 25.500A15.500 15.500 0 1 1 10.500 31.500Z" stroke="#25d366" strokeWidth="3.200" /><path d="M12 9Q9 12 10 15Q13 24 22 27Q26 27 28 23L23 20L20.500 22.500Q16 20 14.500 16.500L16.500 14L14.500 9Z" fill="#25d366" /></g>],
  ["teams", true, <g transform="translate(1 0)"><circle cx="18" cy="7" r="5" fill="#7b83eb" /><circle cx="29" cy="9" r="3.600" fill="#5059c9" /><path d="M12 13H26V28Q24 34 18 34Q13 33 12 28Z" fill="#7b83eb" /><path d="M26 14H35V24Q33 29 26 28Z" fill="#5059c9" /><rect x="0" y="9" width="18" height="18" rx="2" fill="#464eb8" /><path d="M5 13.500H13M9 13.500V23" stroke="#fff" strokeWidth="2.200" /><circle cx="27" cy="27" r="10.500" fill="#13a10e" /><path d="M22.500 27L26 30.500L31.500 24" stroke="#111" strokeWidth="2.200" /></g>],
  ["cmd", true, <g><path d="M1.500 4.500H34.500V31H1.500Z" fill="#000" stroke="#b4b7bd" strokeWidth="1.500" /><path d="M1 4H35V7H1Z" fill="#c3c9d4" /><path d="M2.500 7.500H33L2.500 20Z" fill="#333" /><text x="4" y="14" fontFamily="Liberation Mono" fontWeight="700" fontSize="7" fill="#eee">C:\_</text></g>],
  ["wps", false, <g><circle cx="18" cy="18" r="18" fill="#fc4118" /><path d="M6 11.500H16L19 23L22 13.500H29L24 25.500H21.500L17.500 13.500" stroke="#fff" strokeWidth="3" /><path d="M9 12L13.500 25.500H16L19 17" stroke="#fff" strokeWidth="3" /></g>],
  ["x", true, <g><path d="M22 4H33L22 18L33 33H24L15 18Z" fill="#2fc4d0" /><path d="M3 4H10L15 11L11 15ZM3 33H10L15 26L11 21Z" fill="#2fc4d0" /></g>],
  ["notepad", true, <g><path d="M12 3H32L30 33L24 32Z" fill="#e6e3dc" /><path d="M10 4L28 5L24 33L2 27Z" fill="#77bccb" /><path d="M10 4L28 5L27 12L8 11Z" fill="#bfe4ea" /><path d="M11 4H30" stroke="#555" strokeWidth="3" strokeDasharray="1.500 1" /></g>],
];
const sw = { stroke: "#f2f2f2", strokeWidth: 1.5 };

export default function App() {
  return (
    <Window>
      <Global />
      <TopStrip />
      <TitleBar>
        <BoardIcon s={24} />
        <TitleText>*led_driver_all_tracks — PCB Editor</TitleText>
        <WinControls>
          <svg width="212" height="35" viewBox="1708 0 212 35" fill="none" stroke="#000" shapeRendering="crispEdges">
            <path d="M1736 16.500H1751M1805.500 12.500H1816.500V23.500H1805.500ZM1808.500 12V9.500H1819.500V20.500H1817" />
            <path d="M1876 9L1891 24M1891 9L1876 24" shapeRendering="auto" strokeWidth="1.200" />
          </svg>
        </WinControls>
      </TitleBar>
      <MenuBar>{menus.map(([m, w]) => <MenuItem key={m} $w={w}>{m}</MenuItem>)}</MenuBar>
      <Toolbar>
        {tools.map((t, i) => (t === "|" ? <Sep key={i} /> : <Tool key={i}><I overflow="visible">{icons[t]}</I></Tool>))}
      </Toolbar>
      <OptionsRow>
        <Options>
          <Combo $w={230}><ComboLabel>Track: use netclass width</ComboLabel><Chevron /></Combo>
          <Toggle $on $m="0 0 0 3px"><I>{icons.width}</I></Toggle>
          <Sep $m="2px 6px 0 5px" />
          <Combo $w={220}><ComboLabel>Via: use netclass sizes</ComboLabel><Chevron /></Combo>
          <Sep $m="2px 6px 0 5px" />
          <Combo $w={182} $h={31} $white><ComboLabel><CuSwatch />F.Cu (PgUp)</ComboLabel><Chevron /></Combo>
          <Toggle $m="0 0 0 3px"><I>{icons.layers}</I></Toggle>
          <Sep $m="2px 6px 0 5px" />
          <Combo $w={226} $ls="0.15px"><ComboLabel>0.5000 mm (0.0197 in)</ComboLabel><Chevron /></Combo>
          <Sep $m="2px 6px 0 5px" />
          <Combo $w={144} $ls="0.15px"><ComboLabel>Zoom 1.50</ComboLabel><Chevron /></Combo>
        </Options>
      </OptionsRow>
      <Middle>
        <VerticalTools items={leftTools} />
        <CanvasFrame><Pcb /></CanvasFrame>
        <VerticalTools items={rightTools} />
        <Dock>
          <Caption>Appearance</Caption>
          <Panel $h={541} $p="5px 0 0 1px" $mb={6}>
            <Tabs>
              <Tab $on $w={75} $pl={6}>Layers</Tab>
              <Tab $w={70} $pl={5}>Objects</Tab>
              <Tab $w={70} $pl={6}>Nets</Tab>
            </Tabs>
            <Page>
              <ListWrap>
                <List>
                  {layers.map(([n, c, c2], i) => (
                    <Row key={n} $on={i === 0}>
                      <Mark $on={i === 0} />
                      <Swatch $c={c} $c2={c2} />
                      <Eye />
                      <RowName>{n}</RowName>
                    </Row>
                  ))}
                </List>
                <Scroll>
                  <svg width="24" height="26" viewBox="0 0 24 26" fill="none"><path d="M6.500 18L12 12.500L17.500 18" stroke={K} strokeWidth="2.400" /></svg>
                  <Thumb />
                  <svg width="24" height="26" viewBox="0 0 24 26" fill="none"><path d="M6.500 10L12 15.500L17.500 10" stroke={K} strokeWidth="2.400" /></svg>
                </Scroll>
              </ListWrap>
              <DisplayOptions><i />Layer Display Options</DisplayOptions>
            </Page>
            <Field $m="11px 0 1px 6px">Presets (Ctrl+Tab):</Field>
            <Combo $w={256} $m="0 0 0 6px"><ComboLabel>All Layers</ComboLabel><Chevron /></Combo>
            <Field $m="3px 0 1px 6px">Viewports (Shift+Tab):</Field>
            <Combo $w={256} $m="0 0 0 6px" $ls="1.4px"><ComboLabel>---</ComboLabel><Chevron /></Combo>
          </Panel>
          <Caption>Selection Filter</Caption>
          <Panel $h={160}>
            <Checks>
              {filters.map((f) => (
                <Check key={f}>
                  <Box>
                    {f !== "Locked items" && (
                      <svg width="18" height="18" viewBox="0 0 18 18" fill="none"><path d="M3 9L7 13L15.500 4.500" stroke="#222" strokeWidth="1.600" /></svg>
                    )}
                  </Box>
                  {f}
                </Check>
              ))}
            </Checks>
          </Panel>
        </Dock>
      </Middle>
      <Message>
        {messages.map(([a, b, w]) => <MsgItem key={a} $w={w}><MsgLabel>{a}</MsgLabel><MsgValue $num={hasDigit(b)}>{b}</MsgValue></MsgItem>)}
      </Message>
      <Status>{cells.map(([t, w], i) => <Cell key={i} $w={w} $num={hasDigit(t)}>{t}</Cell>)}</Status>
      <TaskBar>
        <Start>
          <svg width="24" height="24" viewBox="0 0 24 24" fill="#fff"><path d="M0 3.500L10 2V11.500H0ZM11 1.800L24 0V11.500H11ZM0 12.500H10V22L0 20.500ZM11 12.500H24V24L11 22.200Z" /></svg>
        </Start>
        <Search>
          <svg width="24" height="24" viewBox="0 0 24 24" fill="none" stroke="#eee" strokeWidth="1.700"><circle cx="15.500" cy="8.500" r="7.500" /><path d="M10 14L1 23.500" /></svg>
          <SearchText>Type here to search</SearchText>
          <svg width="96" height="56" viewBox="394 1022 96 56">
            <path d="M432 1032Q435 1046 449 1049Q435 1052 432 1066Q429 1052 415 1049Q429 1046 432 1032Z" fill="#fcd116" stroke="#fcd116" strokeWidth="2" strokeLinejoin="round" />
            <path d="M466 1047Q467.500 1053.500 474 1055Q467.500 1056.500 466 1063Q464.500 1056.500 458 1055Q464.500 1053.500 466 1047Z" fill="#f7c52e" stroke="#f7c52e" strokeWidth="1.500" />
            <path d="M402 1056L405 1060L410 1060L407 1063L406 1068L402 1065L397 1065L400 1061Z" fill="#13a3f0" />
            <circle cx="457" cy="1035" r="3" fill="#f0642c" /><circle cx="484" cy="1064" r="3" fill="#86c440" />
          </svg>
        </Search>
        {taskApps.map(([n, run, g]) => <TaskButton key={n}><I overflow="visible">{g}</I>{run && <Running />}</TaskButton>)}
        <TaskButton $active $w={67} $ml={1}><BoardIcon s={36} /><Running $full /></TaskButton>
        <Tray>
          <TrayIcon $w={58}><svg width="18" height="10" viewBox="0 0 18 10" fill="none" {...sw}><path d="M1 9L9 1L17 9" /></svg></TrayIcon>
          <TrayIcon $w={40}><svg width="20" height="20" viewBox="0 0 20 20" fill="none" stroke="#bbb" strokeWidth="1.500"><path d="M1 19Q2 2 19 1M5 19Q6 7 19 6M10 19Q11 12 19 11" /><circle cx="17" cy="17" r="1.300" fill="#fff" stroke="#fff" /></svg></TrayIcon>
          <TrayIcon $w={54}><svg width="26" height="20" viewBox="0 0 26 20" fill="none"><circle cx="12" cy="7" r="7" fill="#777" /><circle cx="6" cy="10" r="6" fill="#ccc" /><path d="M2 16Q8 8 14 10V16Z" fill="#ddd" /><circle cx="18" cy="13" r="7" fill="#d9272e" /><path d="M15 10L21 16M21 10L15 16" stroke="#fff" strokeWidth="1.800" /></svg></TrayIcon>
          <TrayIcon $w={43}><svg width="24" height="26" viewBox="0 0 24 26" fill="none" {...sw}><path d="M1 4L23 1V15M1 4V22H14" /><path d="M7 12Q8 8 12 8H15M15 5V9M16 13Q15 17 11 17H8M8 20V16" /><circle cx="18.500" cy="19.500" r="5.500" fill="#ff9800" stroke="none" /></svg></TrayIcon>
          <TrayIcon $w={54}><svg width="18" height="24" viewBox="0 0 18 24" fill="none" {...sw}><rect x="1" y="6" width="10" height="11" rx="2" /><path d="M11 11L16 7V17L11 13M2 2Q8 -1 14 2M2 21Q8 24 14 21" /></svg></TrayIcon>
          <TrayIcon $w={41}><svg width="26" height="20" viewBox="0 0 26 20" fill="none" {...sw}><rect x="7" y="5" width="16" height="11" /><path d="M8 7H21V14H8Z" fill="#fff" stroke="none" /><path d="M24.500 8V13M2 1V5M6 1V5M1 5H7V8Q7 10 4 10Q1 10 1 8ZM4 10V16H8" /></svg></TrayIcon>
          <TrayIcon $w={54}><svg width="24" height="20" viewBox="0 0 24 20" fill="none" {...sw}><path d="M1 7H4L9 2V18L4 13H1ZM13 7Q15 10 13 13M16 5Q19 10 16 15M19 2Q24 10 19 18" /></svg></TrayIcon>
          <TrayIcon $w={56}><svg width="22" height="22" viewBox="0 0 22 22" fill="none" {...sw}><path d="M6 17L15 2Q18 0 19 3L10 18L6 20ZM8 10Q1 9 1 14Q2 20 7 17M14 13Q20 9 20 13Q18 17 11 17" /></svg></TrayIcon>
          <Lang>ENG</Lang>
          <Clock><div>14:36</div><div>25-04-2025</div></Clock>
          <Notice>
            <svg width="38" height="40" viewBox="0 0 38 40" fill="none"><path d="M0 3H24V23H12L8 28V23H0Z" fill="#fff" /><path d="M5 8.500H19M5 13H19M5 17.500H15" stroke="#101010" strokeWidth="1.400" /><circle cx="23" cy="27" r="12" fill="#2b2b2b" stroke="#777" strokeWidth="1.300" /><text x="23" y="33" textAnchor="middle" fontFamily="Open Sans" fontSize="16" fontWeight="600" fill="#fff">2</text></svg>
          </Notice>
          <ShowDesktop />
        </Tray>
      </TaskBar>
    </Window>
  );
}
